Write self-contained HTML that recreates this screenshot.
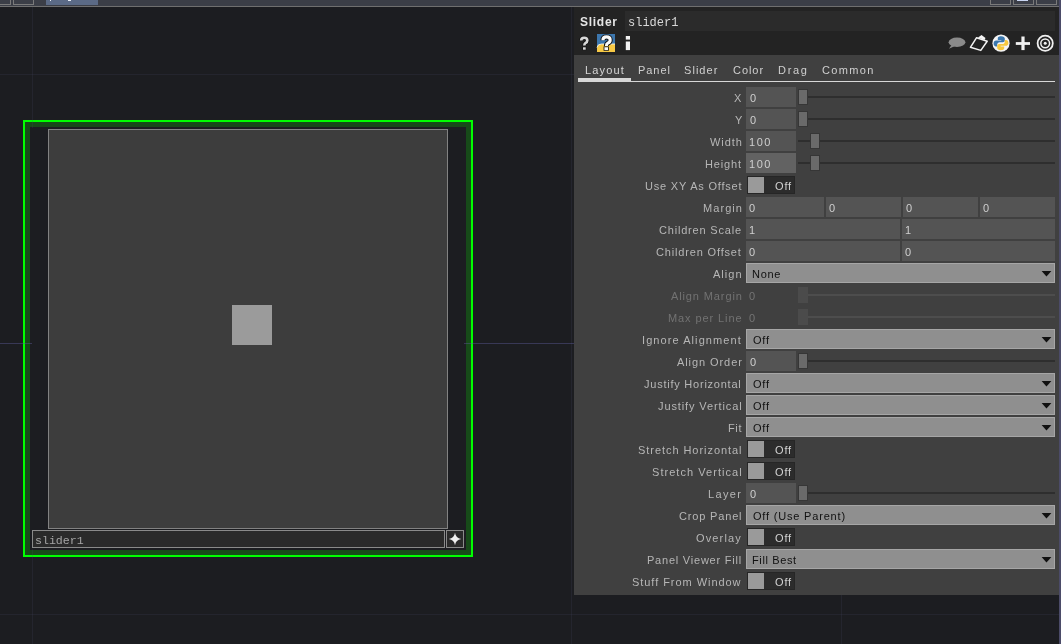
<!DOCTYPE html>
<html><head><meta charset="utf-8">
<style>
html,body{margin:0;padding:0;}
body{width:1061px;height:644px;overflow:hidden;position:relative;background:#1c1d21;font-family:"Liberation Sans",sans-serif;}
div{position:absolute;}
.t,.v,.lab{font-size:11px;letter-spacing:0.75px;white-space:nowrap;line-height:20px;height:20px;}
.h{white-space:nowrap;}
.t,.v,.lab,.h,.mono{will-change:transform;}
.lab{right:320px;text-align:right;}
</style></head><body>
<!-- top bar -->
<div style="left:0px;top:0px;width:1061px;height:6px;background:#3b3e47"></div>
<div style="left:0px;top:6px;width:1061px;height:1px;background:#6f6f6f"></div>
<div style="left:-3px;top:-3px;width:14px;height:8px;box-sizing:border-box;border:1px solid #7a7a7a"></div>
<div style="left:13px;top:-3px;width:21px;height:8px;box-sizing:border-box;border:1px solid #7a7a7a"></div>
<div style="left:46px;top:0px;width:52px;height:5px;background:#5b6a86"></div>
<div style="left:50px;top:0px;width:1px;height:1px;background:#e8ecf4"></div>
<div style="left:68px;top:0px;width:3px;height:1px;background:#e8ecf4"></div>
<div style="left:990px;top:-3px;width:21px;height:8px;box-sizing:border-box;border:1px solid #7a7a7a"></div>
<div style="left:1013px;top:-3px;width:21px;height:8px;box-sizing:border-box;border:1px solid #7a7a7a"></div>
<div style="left:1017px;top:0px;width:11px;height:1px;background:#c8d4f0"></div>
<div style="left:1036px;top:-3px;width:21px;height:8px;box-sizing:border-box;border:1px solid #7a7a7a"></div>
<div style="left:1059px;top:0px;width:2px;height:644px;background:#4b4b68"></div>

<!-- node border -->
<div style="left:23px;top:120px;width:450px;height:437px;box-sizing:border-box;border:2px solid #00ff00"></div>
<div style="left:25px;top:122px;width:446px;height:433px;box-sizing:border-box;border:5px solid #174a19"></div>
<!-- grid -->
<div style="left:32px;top:7px;width:1px;height:637px;background:rgba(70,72,100,0.2)"></div>
<div style="left:571px;top:7px;width:1px;height:637px;background:rgba(70,72,100,0.2)"></div>
<div style="left:841px;top:595px;width:1px;height:49px;background:rgba(70,72,100,0.2)"></div>
<div style="left:0px;top:74px;width:574px;height:1px;background:rgba(70,72,100,0.2)"></div>
<div style="left:0px;top:614px;width:1059px;height:1px;background:rgba(70,72,100,0.2)"></div>
<div style="left:0px;top:343px;width:574px;height:1px;background:rgba(90,90,150,0.45)"></div>
<!-- node interior -->
<div style="left:32px;top:128px;width:432px;height:421px;background:#1c1d21"></div>
<div style="left:48px;top:129px;width:400px;height:400px;box-sizing:border-box;border:1px solid #828282;background:#3d3d3d"></div>
<div style="left:232px;top:305px;width:40px;height:40px;background:#9b9b9b"></div>
<div style="left:32px;top:530px;width:413px;height:18px;box-sizing:border-box;border:1px solid #8a8a8a;background:#2a2a2a"></div>
<div class="mono" style="left:35px;top:532px;height:18px;line-height:18px;font-family:'Liberation Mono',monospace;font-size:11.6px;color:#a4a4a4;">slider1</div>
<div style="left:446px;top:530px;width:18px;height:18px;box-sizing:border-box;border:1px solid #8a8a8a;background:#2a2a2a"></div>
<svg style="position:absolute;left:446px;top:530px" width="18" height="18"><path d="M9 2.8 Q9.8 8.2 15.2 9 Q9.8 9.8 9 15.2 Q8.2 9.8 2.8 9 Q8.2 8.2 9 2.8 Z" fill="#f0f0f0"/></svg>

<!-- panel -->
<div style="left:574px;top:7px;width:485px;height:48px;background:#232323"></div>
<div style="left:625px;top:11px;width:430px;height:20px;background:#2b2b2b"></div>
<div id="hdr" class="h" style="left:579.50px;top:12px;letter-spacing:0.730px;line-height:20px;font-size:12px;font-weight:bold;color:#e6e6e6">Slider</div>
<div class="mono" style="left:628px;top:13px;line-height:20px;font-family:'Liberation Mono',monospace;font-size:12px;color:#d8d8d8;">slider1</div>
<svg style="position:absolute;left:574px;top:30px" width="70" height="25">
<path d="M7.2 10.6 Q7.2 7.8 10.2 7.8 Q13.3 7.8 13.3 10.4 Q13.3 12.2 11.4 13.1 Q10.3 13.7 10.3 15.6" fill="none" stroke="#161616" stroke-width="4.2"/>
<rect x="8.2" y="16.6" width="4.2" height="3.6" fill="#161616"/>
<path d="M7.2 10.6 Q7.2 7.8 10.2 7.8 Q13.3 7.8 13.3 10.4 Q13.3 12.2 11.4 13.1 Q10.3 13.7 10.3 15.6" fill="none" stroke="#d8d8d8" stroke-width="2.6"/>
<rect x="9" y="17.3" width="2.7" height="2.4" fill="#d8d8d8"/>
<rect x="23" y="4" width="18" height="18" fill="#3d77ae"/>
<path d="M23 22 L23 17.5 Q23.5 14 27.5 14 L41 14 L41 22 Z" fill="#f7c945"/>
<path d="M23 17.5 Q23.5 14 27.5 14 L41 14" fill="none" stroke="#f0f0e8" stroke-width="0.9"/>
<path d="M28.9 10.2 Q28.9 6.9 32.5 6.9 Q36.2 6.9 36.2 10 Q36.2 12.1 33.9 13.2 Q32.4 13.9 32.4 16" fill="none" stroke="#111" stroke-width="5"/>
<rect x="29.6" y="16.4" width="5.2" height="4.4" fill="#111"/>
<path d="M28.9 10.2 Q28.9 6.9 32.5 6.9 Q36.2 6.9 36.2 10 Q36.2 12.1 33.9 13.2 Q32.4 13.9 32.4 16" fill="none" stroke="#fafafa" stroke-width="3.1"/>
<rect x="30.4" y="17.2" width="3.6" height="2.9" fill="#fafafa"/>
<rect x="51.8" y="6" width="4.2" height="3.6" fill="#f2f2f2"/>
<rect x="51.8" y="11.5" width="4.2" height="8.6" fill="#f2f2f2"/>
</svg>
<svg style="position:absolute;left:940px;top:30px" width="119" height="25">
<ellipse cx="17" cy="12.3" rx="8.4" ry="4.7" fill="#8a8a8a"/>
<path d="M11.5 15 L9 18.8 L15 16 Z" fill="#8a8a8a"/>
<path d="M36.6 7.7 L47.2 11.3 L40.8 20.4 L30.4 17.3 Z" fill="none" stroke="#f4f4f4" stroke-width="1.5" stroke-linejoin="round"/>
<path d="M38 7.5 L41.5 5 L45.5 8 L44.5 10 Z" fill="#f4f4f4"/>
<circle cx="61" cy="13.2" r="8.6" fill="#f4f4f4"/>
<path d="M61.2 6.2 C58.2 6.2 57.8 7.4 57.8 8.6 L57.8 10 L61.3 10 L61.3 10.6 L56.2 10.6 C54.6 10.6 53.6 11.8 53.6 13.5 C53.6 15.3 54.6 16.4 56 16.4 L57.2 16.4 L57.2 14.7 C57.2 13.3 58.3 12.3 59.6 12.3 L62.8 12.3 C64 12.3 64.8 11.4 64.8 10.3 L64.8 8.6 C64.8 7.3 63.6 6.2 61.2 6.2 Z" fill="#3b77ad"/>
<path d="M60.8 20.2 C63.8 20.2 64.2 19 64.2 17.8 L64.2 16.4 L60.7 16.4 L60.7 15.8 L65.8 15.8 C67.4 15.8 68.4 14.6 68.4 12.9 C68.4 11.1 67.4 10 66 10 L64.8 10 L64.8 11.7 C64.8 13.1 63.7 14.1 62.4 14.1 L59.2 14.1 C58 14.1 57.2 15 57.2 16.1 L57.2 17.8 C57.2 19.1 58.4 20.2 60.8 20.2 Z" fill="#f6c83d"/>
<rect x="75.8" y="12.1" width="14.2" height="2.8" fill="#f0f0f0"/>
<rect x="81.4" y="6.5" width="3.2" height="13.6" fill="#f0f0f0"/>
<circle cx="105.2" cy="13.3" r="7.6" fill="none" stroke="#f0f0f0" stroke-width="1.8"/>
<circle cx="105.2" cy="13.3" r="4.4" fill="none" stroke="#f0f0f0" stroke-width="1.5"/>
<circle cx="105.2" cy="13.3" r="1.5" fill="#f0f0f0"/>
</svg>

<div style="left:574px;top:55px;width:485px;height:540px;background:#404040"></div>
<div id="tab0" class="v" style="left:584.50px;top:60px;letter-spacing:1.150px;color:#d6d6d6">Layout</div>
<div id="tab1" class="v" style="left:637.50px;top:60px;letter-spacing:0.950px;color:#d0d0d0">Panel</div>
<div id="tab2" class="v" style="left:683.50px;top:60px;letter-spacing:1.050px;color:#d0d0d0">Slider</div>
<div id="tab3" class="v" style="left:732.50px;top:60px;letter-spacing:0.950px;color:#d0d0d0">Color</div>
<div id="tab4" class="v" style="left:777.50px;top:60px;letter-spacing:1.714px;color:#d0d0d0">Drag</div>
<div id="tab5" class="v" style="left:821.50px;top:60px;letter-spacing:1.370px;color:#d0d0d0">Common</div>
<div style="left:578px;top:81px;width:477px;height:1px;background:#d8d8d8"></div>
<div style="left:578px;top:78px;width:53px;height:4px;background:#d8d8d8"></div>

<div id="lab0" class="v" style="left:733.50px;top:88px;letter-spacing:0.750px;color:#b6b6b6">X</div>
<div style="left:746px;top:87px;width:50px;height:20px;background:#545454"></div>
<div id="val0" class="v" style="left:749.60px;top:88px;letter-spacing:0.750px;color:#cfcfcf">0</div>
<div style="left:798px;top:96px;width:257px;height:2px;background:#2e2e2e"></div>
<div style="left:798px;top:89px;width:10px;height:16px;background:#363636"></div>
<div style="left:799px;top:90px;width:8px;height:14px;background:#6a6a6a"></div>
<div id="lab1" class="v" style="left:734.50px;top:110px;letter-spacing:0.750px;color:#b6b6b6">Y</div>
<div style="left:746px;top:109px;width:50px;height:20px;background:#545454"></div>
<div id="val1" class="v" style="left:749.60px;top:110px;letter-spacing:0.750px;color:#cfcfcf">0</div>
<div style="left:798px;top:118px;width:257px;height:2px;background:#2e2e2e"></div>
<div style="left:798px;top:111px;width:10px;height:16px;background:#363636"></div>
<div style="left:799px;top:112px;width:8px;height:14px;background:#6a6a6a"></div>
<div id="lab2" class="v" style="left:709.50px;top:132px;letter-spacing:0.925px;color:#b6b6b6">Width</div>
<div style="left:746px;top:131px;width:50px;height:20px;background:#545454"></div>
<div id="val2" class="v" style="left:748.60px;top:132px;letter-spacing:1.550px;color:#cfcfcf">100</div>
<div style="left:798px;top:140px;width:257px;height:2px;background:#2e2e2e"></div>
<div style="left:810px;top:133px;width:10px;height:16px;background:#363636"></div>
<div style="left:811px;top:134px;width:8px;height:14px;background:#6a6a6a"></div>
<div id="lab3" class="v" style="left:704.50px;top:154px;letter-spacing:0.870px;color:#b6b6b6">Height</div>
<div style="left:746px;top:153px;width:50px;height:20px;background:#626262"></div>
<div id="val3" class="v" style="left:748.60px;top:154px;letter-spacing:1.550px;color:#cfcfcf">100</div>
<div style="left:798px;top:162px;width:257px;height:2px;background:#2e2e2e"></div>
<div style="left:810px;top:155px;width:10px;height:16px;background:#363636"></div>
<div style="left:811px;top:156px;width:8px;height:14px;background:#6a6a6a"></div>
<div id="lab4" class="v" style="left:644.50px;top:176px;letter-spacing:0.801px;color:#b6b6b6">Use XY As Offset</div>
<div style="left:747px;top:176px;width:48px;height:18px;background:#2c2c2c;box-sizing:border-box;border:1px solid #262626"></div>
<div style="left:748px;top:177px;width:16px;height:16px;background:#9a9a9a"></div>
<div id="tog4" class="v" style="left:774.80px;top:176px;letter-spacing:0.850px;color:#d2d2d2">Off</div>
<div id="lab5" class="v" style="left:702.50px;top:198px;letter-spacing:1.070px;color:#b6b6b6">Margin</div>
<div style="left:746px;top:197px;width:78px;height:20px;background:#545454"></div>
<div class="v" style="left:749px;top:198px;color:#cfcfcf">0</div>
<div style="left:826px;top:197px;width:75px;height:20px;background:#545454"></div>
<div class="v" style="left:829px;top:198px;color:#cfcfcf">0</div>
<div style="left:903px;top:197px;width:75px;height:20px;background:#545454"></div>
<div class="v" style="left:906px;top:198px;color:#cfcfcf">0</div>
<div style="left:980px;top:197px;width:75px;height:20px;background:#545454"></div>
<div class="v" style="left:983px;top:198px;color:#cfcfcf">0</div>
<div id="lab6" class="v" style="left:658.50px;top:220px;letter-spacing:0.808px;color:#b6b6b6">Children Scale</div>
<div style="left:746px;top:219px;width:154px;height:20px;background:#545454"></div>
<div class="v" style="left:749px;top:220px;color:#cfcfcf">1</div>
<div style="left:902px;top:219px;width:153px;height:20px;background:#545454"></div>
<div class="v" style="left:905px;top:220px;color:#cfcfcf">1</div>
<div id="lab7" class="v" style="left:655.50px;top:242px;letter-spacing:0.836px;color:#b6b6b6">Children Offset</div>
<div style="left:746px;top:241px;width:154px;height:20px;background:#545454"></div>
<div class="v" style="left:749px;top:242px;color:#cfcfcf">0</div>
<div style="left:902px;top:241px;width:153px;height:20px;background:#545454"></div>
<div class="v" style="left:905px;top:242px;color:#cfcfcf">0</div>
<div id="lab8" class="v" style="left:712.50px;top:264px;letter-spacing:1.025px;color:#b6b6b6">Align</div>
<div style="left:746px;top:263px;width:309px;height:20px;background:#8f8f8f;box-sizing:border-box;border:1px solid #a6a6a6"></div>
<div id="men8" class="v" style="left:751.50px;top:264px;letter-spacing:0.684px;color:#111">None</div>
<svg style="position:absolute;left:1041px;top:270px" width="11" height="7"><path d="M0.6 1.1 L10.4 1.1 L5.5 6.6 Z" fill="#111"/></svg>
<div id="lab9" class="v" style="left:670.50px;top:286px;letter-spacing:0.880px;color:#727272">Align Margin</div>
<div class="v" style="left:749px;top:286px;color:#747474">0</div>
<div style="left:798px;top:294px;width:257px;height:2px;background:#4d4d4d"></div>
<div style="left:798px;top:287px;width:10px;height:16px;background:#4b4b4b"></div>
<div id="lab10" class="v" style="left:667.50px;top:308px;letter-spacing:0.912px;color:#727272">Max per Line</div>
<div class="v" style="left:749px;top:308px;color:#747474">0</div>
<div style="left:798px;top:316px;width:257px;height:2px;background:#4d4d4d"></div>
<div style="left:798px;top:309px;width:10px;height:16px;background:#4b4b4b"></div>
<div id="lab11" class="v" style="left:641.50px;top:330px;letter-spacing:1.077px;color:#b6b6b6">Ignore Alignment</div>
<div style="left:746px;top:329px;width:309px;height:20px;background:#8f8f8f;box-sizing:border-box;border:1px solid #a6a6a6"></div>
<div id="men11" class="v" style="left:752.50px;top:330px;letter-spacing:0.800px;color:#111">Off</div>
<svg style="position:absolute;left:1041px;top:336px" width="11" height="7"><path d="M0.6 1.1 L10.4 1.1 L5.5 6.6 Z" fill="#111"/></svg>
<div id="lab12" class="v" style="left:676.50px;top:352px;letter-spacing:0.920px;color:#b6b6b6">Align Order</div>
<div style="left:746px;top:351px;width:50px;height:20px;background:#545454"></div>
<div id="val12" class="v" style="left:749.60px;top:352px;letter-spacing:0.750px;color:#cfcfcf">0</div>
<div style="left:798px;top:360px;width:257px;height:2px;background:#2e2e2e"></div>
<div style="left:798px;top:353px;width:10px;height:16px;background:#363636"></div>
<div style="left:799px;top:354px;width:8px;height:14px;background:#6a6a6a"></div>
<div id="lab13" class="v" style="left:643.50px;top:374px;letter-spacing:0.766px;color:#b6b6b6">Justify Horizontal</div>
<div style="left:746px;top:373px;width:309px;height:20px;background:#8f8f8f;box-sizing:border-box;border:1px solid #a6a6a6"></div>
<div id="men13" class="v" style="left:752.50px;top:374px;letter-spacing:0.800px;color:#111">Off</div>
<svg style="position:absolute;left:1041px;top:380px" width="11" height="7"><path d="M0.6 1.1 L10.4 1.1 L5.5 6.6 Z" fill="#111"/></svg>
<div id="lab14" class="v" style="left:657.50px;top:396px;letter-spacing:0.888px;color:#b6b6b6">Justify Vertical</div>
<div style="left:746px;top:395px;width:309px;height:20px;background:#8f8f8f;box-sizing:border-box;border:1px solid #a6a6a6"></div>
<div id="men14" class="v" style="left:752.50px;top:396px;letter-spacing:0.800px;color:#111">Off</div>
<svg style="position:absolute;left:1041px;top:402px" width="11" height="7"><path d="M0.6 1.1 L10.4 1.1 L5.5 6.6 Z" fill="#111"/></svg>
<div id="lab15" class="v" style="left:727.50px;top:418px;letter-spacing:0.650px;color:#b6b6b6">Fit</div>
<div style="left:746px;top:417px;width:309px;height:20px;background:#8f8f8f;box-sizing:border-box;border:1px solid #a6a6a6"></div>
<div id="men15" class="v" style="left:752.50px;top:418px;letter-spacing:0.800px;color:#111">Off</div>
<svg style="position:absolute;left:1041px;top:424px" width="11" height="7"><path d="M0.6 1.1 L10.4 1.1 L5.5 6.6 Z" fill="#111"/></svg>
<div id="lab16" class="v" style="left:637.50px;top:440px;letter-spacing:0.947px;color:#b6b6b6">Stretch Horizontal</div>
<div style="left:747px;top:440px;width:48px;height:18px;background:#2c2c2c;box-sizing:border-box;border:1px solid #262626"></div>
<div style="left:748px;top:441px;width:16px;height:16px;background:#9a9a9a"></div>
<div id="tog16" class="v" style="left:774.80px;top:440px;letter-spacing:0.850px;color:#d2d2d2">Off</div>
<div id="lab17" class="v" style="left:651.50px;top:462px;letter-spacing:1.042px;color:#b6b6b6">Stretch Vertical</div>
<div style="left:747px;top:462px;width:48px;height:18px;background:#2c2c2c;box-sizing:border-box;border:1px solid #262626"></div>
<div style="left:748px;top:463px;width:16px;height:16px;background:#9a9a9a"></div>
<div id="tog17" class="v" style="left:774.80px;top:462px;letter-spacing:0.850px;color:#d2d2d2">Off</div>
<div id="lab18" class="v" style="left:707.50px;top:484px;letter-spacing:1.350px;color:#b6b6b6">Layer</div>
<div style="left:746px;top:483px;width:50px;height:20px;background:#545454"></div>
<div id="val18" class="v" style="left:749.60px;top:484px;letter-spacing:0.750px;color:#cfcfcf">0</div>
<div style="left:798px;top:492px;width:257px;height:2px;background:#2e2e2e"></div>
<div style="left:798px;top:485px;width:10px;height:16px;background:#363636"></div>
<div style="left:799px;top:486px;width:8px;height:14px;background:#6a6a6a"></div>
<div id="lab19" class="v" style="left:678.50px;top:506px;letter-spacing:0.837px;color:#b6b6b6">Crop Panel</div>
<div style="left:746px;top:505px;width:309px;height:20px;background:#8f8f8f;box-sizing:border-box;border:1px solid #a6a6a6"></div>
<div id="men19" class="v" style="left:752.50px;top:506px;letter-spacing:0.811px;color:#111">Off (Use Parent)</div>
<svg style="position:absolute;left:1041px;top:512px" width="11" height="7"><path d="M0.6 1.1 L10.4 1.1 L5.5 6.6 Z" fill="#111"/></svg>
<div id="lab20" class="v" style="left:695.50px;top:528px;letter-spacing:1.148px;color:#b6b6b6">Overlay</div>
<div style="left:747px;top:528px;width:48px;height:18px;background:#2c2c2c;box-sizing:border-box;border:1px solid #262626"></div>
<div style="left:748px;top:529px;width:16px;height:16px;background:#9a9a9a"></div>
<div id="tog20" class="v" style="left:774.80px;top:528px;letter-spacing:0.850px;color:#d2d2d2">Off</div>
<div id="lab21" class="v" style="left:646.50px;top:550px;letter-spacing:0.777px;color:#b6b6b6">Panel Viewer Fill</div>
<div style="left:746px;top:549px;width:309px;height:20px;background:#8f8f8f;box-sizing:border-box;border:1px solid #a6a6a6"></div>
<div id="men21" class="v" style="left:751.50px;top:550px;letter-spacing:0.625px;color:#111">Fill Best</div>
<svg style="position:absolute;left:1041px;top:556px" width="11" height="7"><path d="M0.6 1.1 L10.4 1.1 L5.5 6.6 Z" fill="#111"/></svg>
<div id="lab22" class="v" style="left:631.50px;top:572px;letter-spacing:0.952px;color:#b6b6b6">Stuff From Window</div>
<div style="left:747px;top:572px;width:48px;height:18px;background:#2c2c2c;box-sizing:border-box;border:1px solid #262626"></div>
<div style="left:748px;top:573px;width:16px;height:16px;background:#9a9a9a"></div>
<div id="tog22" class="v" style="left:774.80px;top:572px;letter-spacing:0.850px;color:#d2d2d2">Off</div>
</body></html>
